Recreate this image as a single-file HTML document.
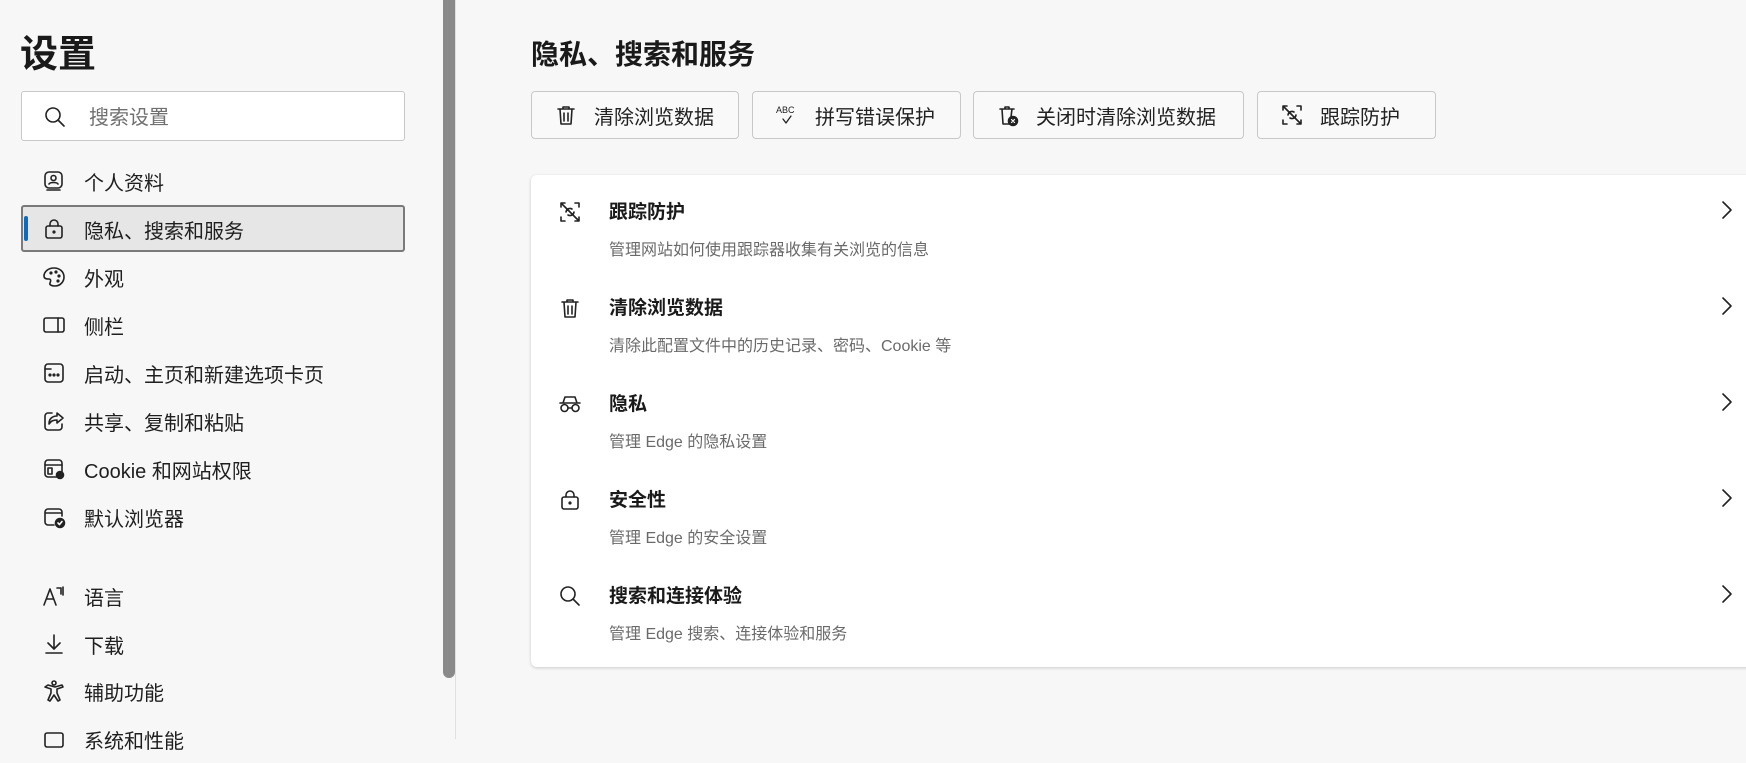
<!DOCTYPE html>
<html><head><meta charset="utf-8"><style>
*{box-sizing:border-box;margin:0;padding:0}
body{width:1746px;height:739px;overflow:hidden;background:#f7f7f7;font-family:"Liberation Sans","Noto Sans CJK SC",sans-serif;color:#1a1a1a;position:relative}
.a{position:absolute}
svg{fill:none;stroke:#222;stroke-width:1.6;stroke-linecap:round;stroke-linejoin:round}
.nav{position:absolute;left:42px;font-size:20px;color:#1f1f1f;height:48px;display:flex;align-items:center}
.nav svg{width:24px;height:24px;margin-right:18px}
.btn{position:absolute;top:91px;height:48px;border:1px solid #c8c8c8;border-radius:4px;background:#f9f9f9;font-size:20px;display:flex;align-items:center;padding-left:22px;color:#222}
.btn svg{width:24px;height:24px;margin-right:16px}
.row{position:absolute;left:27px;right:0;height:96px}
.row svg.i{position:absolute;left:0;top:25px;width:24px;height:24px}
.row .t{position:absolute;left:51px;top:22px;font-size:19px;font-weight:bold;color:#1a1a1a}
.row .s{position:absolute;left:51px;top:61px;font-size:16px;color:#6a6a6a}
.row svg.c{position:absolute;right:37px;top:25px;width:14px;height:20px}
</style></head><body>
<div class="a" style="left:20px;top:23px;font-size:38px;font-weight:bold;color:#1a1a1a">设置</div>
<div class="a" style="left:21px;top:91px;width:384px;height:50px;border:1px solid #c8c8c8;border-radius:3px;background:#fff"></div>
<svg class="a" style="left:43px;top:105px;width:24px;height:24px" viewBox="0 0 24 24"><circle cx="10" cy="10" r="7"/><path d="M15 15l6 6"/></svg>
<div class="a" style="left:89px;top:101px;font-size:20px;color:#707070">搜索设置</div>

<div class="a" style="left:21px;top:205px;width:384px;height:47px;border:2px solid #7a7a7a;border-radius:3px;background:#e6e6e6"></div>
<div class="a" style="left:24px;top:216px;width:4px;height:25px;border-radius:2px;background:#0f6cbd"></div>

<div class="nav" style="top:157px"><svg viewBox="0 0 24 24"><rect x="3" y="3" width="17" height="16" rx="4"/><circle cx="11.5" cy="9" r="2.5"/><path d="M7 15c1-2 8-2 9 0M5 21h13"/></svg>个人资料</div>
<div class="nav" style="top:205px"><svg viewBox="0 0 24 24"><rect x="4" y="9" width="16" height="12" rx="2"/><path d="M8 9V7a4 4 0 018 0v2"/><circle cx="12" cy="15" r=".8" fill="#222"/></svg>隐私、搜索和服务</div>
<div class="nav" style="top:253px"><svg viewBox="0 0 24 24"><path d="M12 3C6 3 2 7 2 11c0 3 3 3 5 3s2 2 1 4c-1 2 2 3 5 3 5 0 9-4 9-9S18 3 12 3z"/><circle cx="9" cy="8" r=".8" fill="#222"/><circle cx="14" cy="7" r=".8" fill="#222"/><circle cx="17" cy="11" r=".8" fill="#222"/><circle cx="16" cy="16" r=".8" fill="#222"/></svg>外观</div>
<div class="nav" style="top:301px"><svg viewBox="0 0 24 24"><rect x="2" y="5" width="20" height="14" rx="2"/><path d="M16 5v14"/></svg>侧栏</div>
<div class="nav" style="top:349px"><svg viewBox="0 0 24 24"><rect x="3" y="3" width="18" height="18" rx="3"/><path d="M3 8h6"/><circle cx="8" cy="14" r=".8" fill="#222"/><circle cx="12" cy="14" r=".8" fill="#222"/><circle cx="16" cy="14" r=".8" fill="#222"/></svg>启动、主页和新建选项卡页</div>
<div class="nav" style="top:397px"><svg viewBox="0 0 24 24"><path d="M10 4H6a3 3 0 00-3 3v11a3 3 0 003 3h11a3 3 0 003-3v-3"/><path d="M15 4l6 5-6 5V11c-4 0-6 1-8 4 0-5 3-8 8-8z"/></svg>共享、复制和粘贴</div>
<div class="nav" style="top:445px"><svg viewBox="0 0 24 24"><rect x="3" y="3" width="17" height="17" rx="3"/><path d="M3 8h17"/><rect x="6" y="11" width="4" height="6"/><circle cx="18" cy="18" r="3.5" fill="#222"/></svg>Cookie 和网站权限</div>
<div class="nav" style="top:493px"><svg viewBox="0 0 24 24"><path d="M12 20H6a3 3 0 01-3-3V7a3 3 0 013-3h11a3 3 0 013 3v4M3 8h17"/><circle cx="18" cy="18" r="4.5" fill="#222"/><path d="M16 18l1.5 1.5 2.5-3" stroke="#fff"/></svg>默认浏览器</div>
<div class="nav" style="top:572px"><svg viewBox="0 0 24 24"><path d="M2 21l6-16 6 16M4.5 15h7M15 4h4v6M21 3v8"/></svg>语言</div>
<div class="nav" style="top:620px"><svg viewBox="0 0 24 24"><path d="M12 3v13M6 11l6 6 6-6M4 21h16"/></svg>下载</div>
<div class="nav" style="top:667px"><svg viewBox="0 0 24 24"><circle cx="12" cy="4" r="2"/><path d="M3 8l6 2v4l-3 7 2 1 4-6 4 6 2-1-3-7v-4l6-2-1-2-7 2-7-2z"/></svg>辅助功能</div>
<div class="nav" style="top:715px"><svg viewBox="0 0 24 24"><rect x="3" y="6" width="18" height="14" rx="2"/></svg>系统和性能</div>

<div class="a" style="left:443px;top:0;width:12px;height:678px;background:#8a8a8a;border-radius:0 0 6px 6px"></div>
<div class="a" style="left:455px;top:0;width:1px;height:739px;background:#e0e0e0"></div>

<div class="a" style="left:531px;top:33px;font-size:28px;font-weight:bold;color:#1a1a1a">隐私、搜索和服务</div>

<div class="btn" style="left:531px;width:208px"><svg viewBox="0 0 24 24"><path d="M4 6h16M9 6V4h6v2M6 6l1 15h10l1-15M10 10v8M14 10v8"/></svg>清除浏览数据</div>
<div class="btn" style="left:752px;width:209px"><svg viewBox="0 0 24 24"><text x="1" y="10" font-size="9" font-family="Liberation Sans" fill="#222" stroke="none">ABC</text><path d="M8 16l3 4 5-7" stroke-width="1.3"/></svg>拼写错误保护</div>
<div class="btn" style="left:973px;width:271px"><svg viewBox="0 0 24 24"><path d="M4 6h14M9 6V4h4v2M6 6l1 15h6M16 6l-1 8"/><circle cx="17" cy="18" r="4.5" fill="#222"/><path d="M15.5 16.5l3 3M18.5 16.5l-3 3" stroke="#fff" stroke-width="1.2"/></svg>关闭时清除浏览数据</div>
<div class="btn" style="left:1257px;width:179px"><svg viewBox="0 0 24 24"><path d="M3 7V3h4M17 3h4v4M21 17v4h-4M7 21H3v-4M4 4l16 16M8 12a4 4 0 016-3M16 12a4 4 0 01-6 3"/></svg>跟踪防护</div>

<div class="a" style="left:531px;top:175px;width:1240px;height:492px;background:#fff;border-radius:6px;box-shadow:0 1px 3px rgba(0,0,0,.18)">
<div class="row" style="top:0"><svg class="i" viewBox="0 0 24 24"><path d="M3 7V3h4M17 3h4v4M21 17v4h-4M7 21H3v-4M4 4l16 16M8 12a4 4 0 016-3M16 12a4 4 0 01-6 3"/></svg><div class="t">跟踪防护</div><div class="s">管理网站如何使用跟踪器收集有关浏览的信息</div><svg class="c" viewBox="0 0 14 20"><path d="M3 2l8 8-8 8"/></svg></div>
<div class="row" style="top:96px"><svg class="i" viewBox="0 0 24 24"><path d="M4 6h16M9 6V4h6v2M6 6l1 15h10l1-15M10 10v8M14 10v8"/></svg><div class="t">清除浏览数据</div><div class="s">清除此配置文件中的历史记录、密码、Cookie 等</div><svg class="c" viewBox="0 0 14 20"><path d="M3 2l8 8-8 8"/></svg></div>
<div class="row" style="top:192px"><svg class="i" viewBox="0 0 24 24"><circle cx="6.5" cy="16" r="3.5"/><circle cx="17.5" cy="16" r="3.5"/><path d="M10 16h4M2 11h20M5 11l2-6h10l2 6"/></svg><div class="t">隐私</div><div class="s">管理 Edge 的隐私设置</div><svg class="c" viewBox="0 0 14 20"><path d="M3 2l8 8-8 8"/></svg></div>
<div class="row" style="top:288px"><svg class="i" viewBox="0 0 24 24"><rect x="4" y="9" width="16" height="12" rx="2"/><path d="M8 9V7a4 4 0 018 0v2"/><circle cx="12" cy="15" r=".8" fill="#222"/></svg><div class="t">安全性</div><div class="s">管理 Edge 的安全设置</div><svg class="c" viewBox="0 0 14 20"><path d="M3 2l8 8-8 8"/></svg></div>
<div class="row" style="top:384px"><svg class="i" viewBox="0 0 24 24"><circle cx="10" cy="10" r="7"/><path d="M15 15l6 6"/></svg><div class="t">搜索和连接体验</div><div class="s">管理 Edge 搜索、连接体验和服务</div><svg class="c" viewBox="0 0 14 20"><path d="M3 2l8 8-8 8"/></svg></div>
</div>
</body></html>
